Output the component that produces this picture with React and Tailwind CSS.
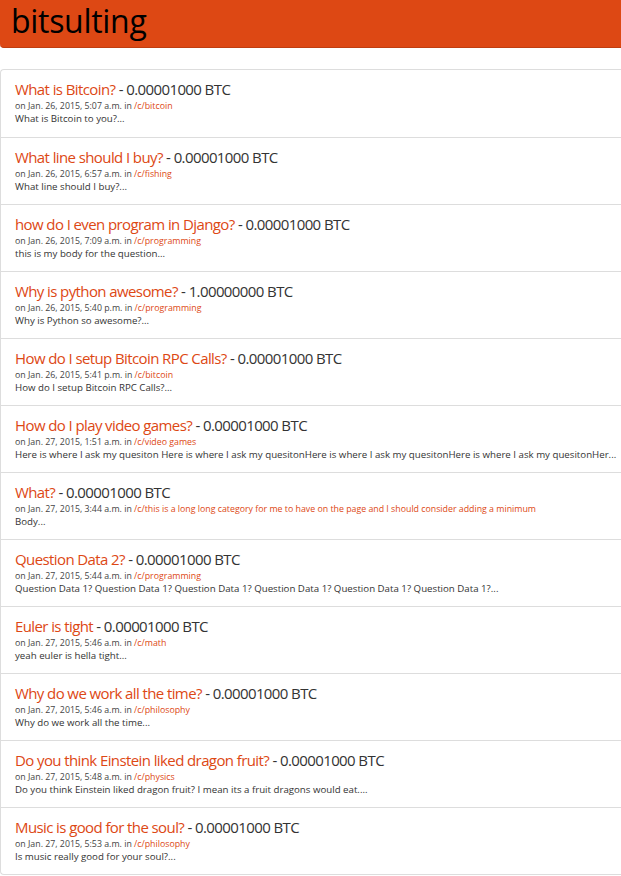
const items = [
  ["What is Bitcoin?", "0.00001000", "Jan. 26, 2015, 5:07 a.m.", "bitcoin", "What is Bitcoin to you?..."],
  ["What line should I buy?", "0.00001000", "Jan. 26, 2015, 6:57 a.m.", "fishing", "What line should I buy?..."],
  ["how do I even program in Django?", "0.00001000", "Jan. 26, 2015, 7:09 a.m.", "programming", "this is my body for the question..."],
  ["Why is python awesome?", "1.00000000", "Jan. 26, 2015, 5:40 p.m.", "programming", "Why is Python so awesome?..."],
  ["How do I setup Bitcoin RPC Calls?", "0.00001000", "Jan. 26, 2015, 5:41 p.m.", "bitcoin", "How do I setup Bitcoin RPC Calls?..."],
  ["How do I play video games?", "0.00001000", "Jan. 27, 2015, 1:51 a.m.", "video games", "Here is where I ask my quesiton Here is where I ask my quesitonHere is where I ask my quesitonHere is where I ask my quesitonHer..."],
  ["What?", "0.00001000", "Jan. 27, 2015, 3:44 a.m.", "this is a long long category for me to have on the page and I should consider adding a minimum", "Body..."],
  ["Question Data 2?", "0.00001000", "Jan. 27, 2015, 5:44 a.m.", "programming", "Question Data 1? Question Data 1? Question Data 1? Question Data 1? Question Data 1? Question Data 1?..."],
  ["Euler is tight", "0.00001000", "Jan. 27, 2015, 5:46 a.m.", "math", "yeah euler is hella tight..."],
  ["Why do we work all the time?", "0.00001000", "Jan. 27, 2015, 5:46 a.m.", "philosophy", "Why do we work all the time..."],
  ["Do you think Einstein liked dragon fruit?", "0.00001000", "Jan. 27, 2015, 5:48 a.m.", "physics", "Do you think Einstein liked dragon fruit? I mean its a fruit dragons would eat...."],
  ["Music is good for the soul?", "0.00001000", "Jan. 27, 2015, 5:53 a.m.", "philosophy", "Is music really good for your soul?..."],
];

export default function App() {
  return (
    <div className="min-h-[876px] w-full bg-white text-[#333] font-['Open_Sans',sans-serif]">
      <div className="h-[48px] w-full rounded-bl-[4px] border-b border-[#bf3e11] bg-[#dd4814] pl-[11px]">
        <span className="block text-[32px] leading-[42px] tracking-[-0.3px] text-black">bitsulting</span>
      </div>
      <div className="mt-[21px] w-full rounded-l-[4px] border-y border-l border-[#dddddd]">
        {items.map((it, i) => (
          <div
            key={i}
            className={"h-[67px] pl-[14px] pt-[9px] whitespace-nowrap " + (i > 0 ? "border-t border-[#dddddd]" : "")}
          >
            <div className="text-[15px] leading-[20px] tracking-[-0.6px]">
              <a className="text-[#dd4814]">{it[0]}</a>
              <span> - {it[1]} BTC</span>
            </div>
            <div className="mt-[1px] text-[8.8px] leading-[12px] text-[#444]">
              on {it[2]} in <a className="text-[#dd4814]">/c/{it[3]}</a>
            </div>
            <div className="text-[9.7px] leading-[14px] text-[#333]">{it[4]}</div>
          </div>
        ))}
      </div>
    </div>
  );
}
